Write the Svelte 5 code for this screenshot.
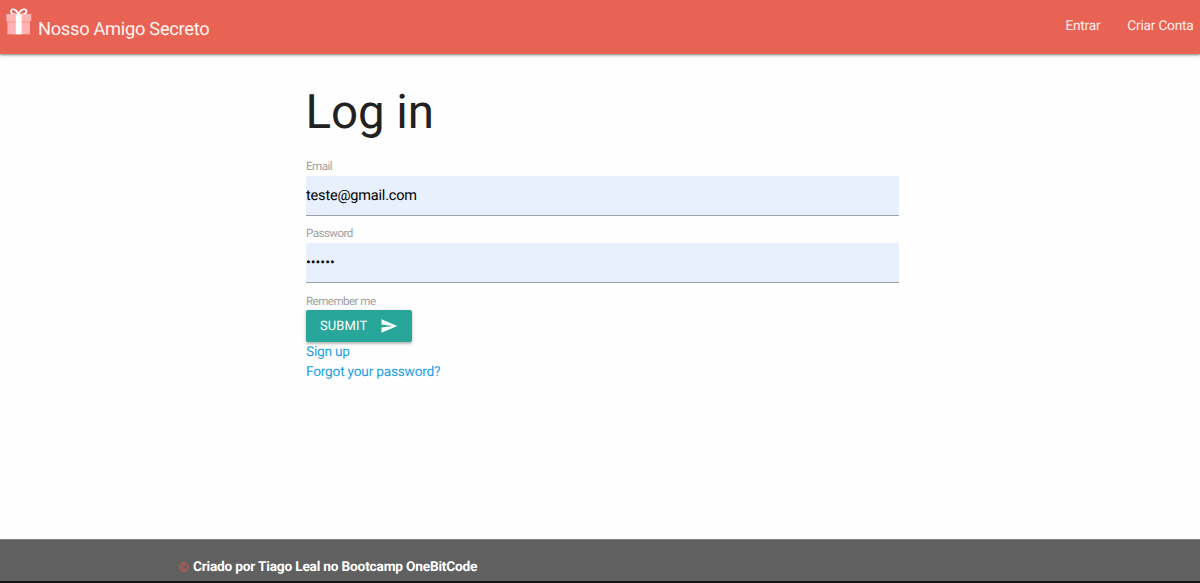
<script>
  let email = $state('teste@gmail.com');
  let password = $state('secret');
</script>

<div class="page">
  <header>
    <a class="brand" href="#home">
      <svg class="gift" width="26" height="28" viewBox="0 0 26 28" aria-hidden="true">
        <path d="M12.5 7C9 7 4.5 6 5 3.2C5.5 0.2 10 0.2 12.5 6.5C15 0.2 20 0.2 20.5 3.2C21 6 16 7 12.5 7Z" fill="none" stroke="#fff" stroke-width="1.7" />
        <rect x="0.3" y="6" width="25" height="7" fill="#ffb3b3" />
        <rect x="1.5" y="13" width="22.5" height="13.3" fill="#ffb3b3" />
        <rect x="1.5" y="13" width="22.5" height="2" fill="#ff9f9f" />
        <rect x="9.8" y="6" width="5.8" height="20.3" fill="#fff" />
      </svg>
      <span>Nosso Amigo Secreto</span>
    </a>
    <nav>
      <a href="#entrar">Entrar</a>
      <a href="#criar">Criar Conta</a>
    </nav>
  </header>

  <main>
    <h1>Log in</h1>
    <form onsubmit={(e) => e.preventDefault()}>
      <label for="email">Email</label>
      <input id="email" type="text" bind:value={email} />
      <label for="password">Password</label>
      <input id="password" class="secret" type="password" bind:value={password} />
      <label class="remember" for="submit">Remember me</label>
      <button id="submit" type="submit">
        <span>Submit</span>
        <svg width="18" height="18" viewBox="0 0 24 24" aria-hidden="true">
          <path d="M2.01 21L23 12 2.01 3 2 10l15 2-15 2z" fill="#fff" />
        </svg>
      </button>
    </form>
    <div class="links">
      <a href="#signup">Sign up</a>
      <a href="#forgot">Forgot your password?</a>
    </div>
  </main>

  <footer>
    <svg width="10" height="10" viewBox="0 0 10 10" aria-hidden="true">
      <circle cx="5" cy="5" r="4.4" fill="none" stroke="#e05a4e" stroke-width="1" />
      <path d="M6.6 3.8A2 2 0 1 0 6.6 6.2" fill="none" stroke="#e05a4e" stroke-width="1" />
    </svg>
    <strong>Criado por Tiago Leal no Bootcamp OneBitCode</strong>
  </footer>
</div>

<style>
  :global(body) {
    margin: 0;
  }
  .page {
    box-sizing: border-box;
    height: 583px;
    display: flex;
    flex-direction: column;
    background: #fefefe;
    font-family: Roboto, sans-serif;
    text-rendering: geometricPrecision;
    color: #212121;
    overflow: hidden;
  }
  a {
    text-decoration: none;
  }
  header {
    height: 54px;
    flex: none;
    display: flex;
    justify-content: space-between;
    background: #e96355;
    box-shadow: 0 1px 2px rgba(0, 0, 0, 0.4), 0 2px 4px rgba(0, 0, 0, 0.12);
  }
  .brand {
    display: flex;
    align-items: flex-start;
    gap: 6px;
    padding: 8px 0 0 6px;
    color: #fff3f1;
    font-size: 18.3px;
    letter-spacing: -0.3px;
    line-height: 43px;
    white-space: nowrap;
  }
  .gift {
    overflow: visible;
  }
  nav {
    display: flex;
    gap: 27px;
    padding-right: 6.5px;
    font-size: 13.7px;
    letter-spacing: -0.22px;
    line-height: 53px;
  }
  nav a {
    color: #fff0ee;
  }
  main {
    flex: 1;
    width: 593px;
    padding-left: 306px;
    display: flex;
    flex-direction: column;
    align-items: flex-start;
  }
  h1 {
    margin: 31px 0 21px;
    font-size: 47.5px;
    letter-spacing: -0.1px;
    line-height: 54px;
    height: 52px;
    font-weight: 400;
    text-indent: -0.5px;
  }
  form {
    width: 100%;
    display: flex;
    flex-direction: column;
    align-items: flex-start;
  }
  label {
    height: 18px;
    font-size: 11.6px;
    letter-spacing: -0.55px;
    line-height: 17px;
    color: #a0a0a0;
  }
  .remember {
    line-height: 19px;
  }
  input {
    box-sizing: border-box;
    width: 100%;
    height: 40px;
    margin: 0 0 9px;
    padding: 0;
    border: 0;
    border-bottom: 1px solid #9e9fa5;
    border-radius: 0;
    outline: 0;
    background: #e8f0fe;
    color: #000;
    font: 14.5px Roboto, sans-serif;
    letter-spacing: -0.18px;
    text-rendering: geometricPrecision;
  }
  .secret {
    font-size: 14.2px;
    letter-spacing: 0;
  }
  button {
    width: 106px;
    height: 32px;
    display: flex;
    align-items: center;
    justify-content: space-between;
    padding: 0 14px;
    border: 0;
    border-radius: 2px;
    background: #28a69a;
    box-shadow: 0 2px 2px rgba(0, 0, 0, 0.18), 0 1px 4px rgba(0, 0, 0, 0.16);
    color: #fff;
    font: 13px Roboto, sans-serif;
    letter-spacing: 0.1px;
    text-rendering: geometricPrecision;
    text-transform: uppercase;
  }
  .links {
    display: flex;
    flex-direction: column;
    padding-top: 1px;
    font-size: 13.7px;
    letter-spacing: -0.22px;
    line-height: 19.5px;
  }
  .links a {
    color: #1a9fe6;
  }
  footer {
    box-sizing: border-box;
    height: 44px;
    flex: none;
    display: flex;
    align-items: center;
    gap: 4px;
    padding: 12px 0 0 179px;
    border-top: 1px solid #858585;
    border-bottom: 2px solid #171416;
    background: #606060;
    color: #fff;
    font-size: 13.7px;
    letter-spacing: -0.2px;
  }
</style>
